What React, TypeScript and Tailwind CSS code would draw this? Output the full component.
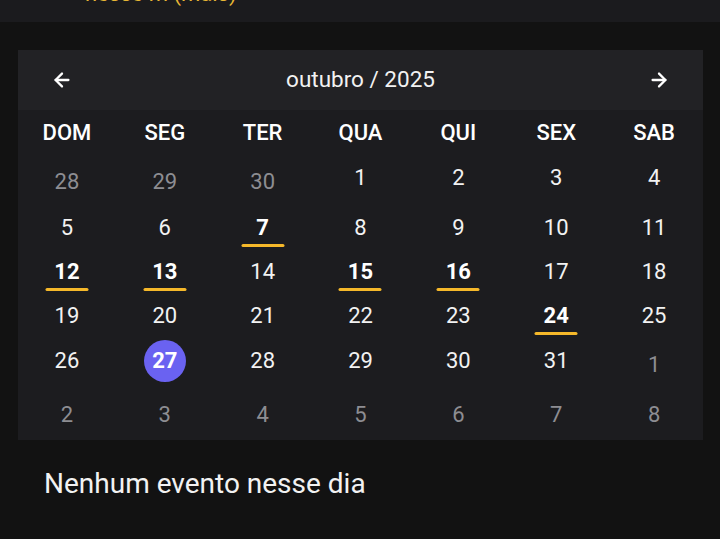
import { ArrowLeft, ArrowRight } from 'lucide-react';

const diasSemana = ['DOM', 'SEG', 'TER', 'QUA', 'QUI', 'SEX', 'SAB'];

type Dia = { n: number; fora?: boolean; evento?: boolean; hoje?: boolean };

const semanas: { h: string; dias: Dia[] }[] = [
  {
    h: 'h-[48px] pb-[3px]',
    dias: [
      { n: 28, fora: true }, { n: 29, fora: true }, { n: 30, fora: true },
      { n: 1 }, { n: 2 }, { n: 3 }, { n: 4 },
    ],
  },
  {
    h: 'h-[47px] pt-[3px]',
    dias: [{ n: 5 }, { n: 6 }, { n: 7, evento: true }, { n: 8 }, { n: 9 }, { n: 10 }, { n: 11 }],
  },
  {
    h: 'h-[44px]',
    dias: [
      { n: 12, evento: true }, { n: 13, evento: true }, { n: 14 }, { n: 15, evento: true },
      { n: 16, evento: true }, { n: 17 }, { n: 18 },
    ],
  },
  {
    h: 'h-[43px]',
    dias: [{ n: 19 }, { n: 20 }, { n: 21 }, { n: 22 }, { n: 23 }, { n: 24, evento: true }, { n: 25 }],
  },
  {
    h: 'h-[47px]',
    dias: [
      { n: 26 }, { n: 27, hoje: true }, { n: 28 }, { n: 29 }, { n: 30 }, { n: 31 },
      { n: 1, fora: true },
    ],
  },
  {
    h: 'h-[52px]',
    dias: [
      { n: 2, fora: true }, { n: 3, fora: true }, { n: 4, fora: true }, { n: 5, fora: true },
      { n: 6, fora: true }, { n: 7, fora: true }, { n: 8, fora: true },
    ],
  },
];

function Celula({ dia }: { dia: Dia }) {
  if (dia.hoje) {
    return (
      <div className="flex items-center justify-center">
        <div className="w-[42px] h-[42px] rounded-full bg-[#6a62f1] flex items-center justify-center font-bold text-white">
          {dia.n}
        </div>
      </div>
    );
  }
  if (dia.fora) {
    return (
      <div className="flex items-center justify-center pt-[8px] text-[#8d8d92]">{dia.n}</div>
    );
  }
  return (
    <div className="flex items-center justify-center">
      <div className="relative leading-none">
        <span className={dia.evento ? 'font-bold text-white' : 'text-[#f2f2f2]'}>{dia.n}</span>
        {dia.evento && (
          <div className="absolute left-1/2 -translate-x-1/2 top-[27px] w-[43px] h-[3px] rounded-full bg-[#f5b82a]" />
        )}
      </div>
    </div>
  );
}

export default function App() {
  return (
    <div
      className="w-[720px] h-[539px] bg-[#121212] overflow-hidden text-white"
      style={{ fontFamily: 'Roboto, "Noto Sans", sans-serif' }}
    >
      {/* faixa de cima, cortada */}
      <div className="h-[22px] bg-[#1b1b1e] overflow-hidden">
        <div className="pl-[85px] -mt-[19px] text-[22px] leading-[26px] text-[#e8b735]">nesse m (mais)</div>
      </div>

      <div className="mt-[28px] mx-[18px] w-[685px] bg-[#1c1c1f]">
        <div className="h-[60px] bg-[#222225] flex items-center justify-between px-[33px]">
          <ArrowLeft size={22} strokeWidth={2.5} className="text-white" />
          <span className="text-[22.5px] text-[#f2f2f2]">outubro / 2025</span>
          <ArrowRight size={22} strokeWidth={2.5} className="text-white" />
        </div>

        <div className="grid grid-cols-7 h-[45px] items-center text-[22px] font-medium">
          {diasSemana.map((d) => (
            <div key={d} className="text-center">{d}</div>
          ))}
        </div>

        <div className="pb-[4px] text-[22px]">
          {semanas.map((s, i) => (
            <div key={i} className={`grid grid-cols-7 items-center ${s.h}`}>
              {s.dias.map((d, j) => (
                <Celula key={j} dia={d} />
              ))}
            </div>
          ))}
        </div>
      </div>

      <div className="pl-[44px] pt-[23px] text-[28px] text-[#f2f2f2]">Nenhum evento nesse dia</div>
    </div>
  );
}
